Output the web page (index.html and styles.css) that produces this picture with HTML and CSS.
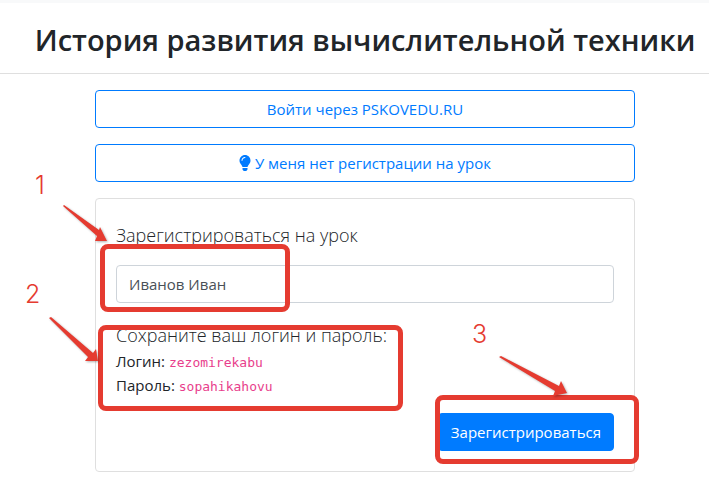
FILE: index.html
```
<!DOCTYPE html>
<html lang="ru">
<head>
    <meta charset="UTF-8">
    <meta name="viewport" content="width=device-width, initial-scale=1.0">
    <title>История развития вычислительной техники</title>
    <link rel="stylesheet" href="styles.css">
</head>
<body>
    <header class="page-header">
        <h1 class="page-title">История развития вычислительной техники</h1>
    </header>
    <main class="container">
        <button type="button" class="btn btn-outline">Войти через PSKOVEDU.RU</button>
        <button type="button" class="btn btn-outline">
            <svg class="icon" viewBox="0 0 352 512" aria-hidden="true">
                <path fill="currentColor" d="M96 454c0 6 2 12 5 18l17 25c6 9 16 15 27 15h62c11 0 21-6 27-15l17-25c3-6 5-12 5-18V416H96zM0 176c0 44 16 85 44 116 17 19 43 59 52 92h160c9-33 35-73 52-92 28-31 44-72 44-116C352 79 273 0 176 0 74 0 0 83 0 176zm176-80c-44 0-80 36-80 80 0 9-7 16-16 16s-16-7-16-16c0-62 50-112 112-112 9 0 16 7 16 16s-7 16-16 16z"/>
            </svg>
            У меня нет регистрации на урок
        </button>
        <form class="card">
            <label class="lead" for="full-name">Зарегистрироваться на урок</label>
            <input class="form-control" type="text" id="full-name" value="Иванов Иван">
            <div class="credentials">
                <div class="lead">Сохраните ваш логин и пароль:</div>
                <div>Логин: <code>zezomirekabu</code></div>
                <div>Пароль: <code>sopahikahovu</code></div>
            </div>
            <button type="button" class="btn btn-primary">Зарегистрироваться</button>
        </form>
    </main>

    <!-- Пометки с шагами поверх страницы -->
    <div class="mark mark-name"></div>
    <div class="mark mark-credentials"></div>
    <div class="mark mark-submit"></div>
    <span class="step step-1">1</span>
    <span class="step step-2">2</span>
    <span class="step step-3">3</span>
    <svg class="arrows" width="709" height="477" viewBox="0 0 709 477" aria-hidden="true">
        <path d="M63 206L64 205L99 230L100 227L107 241L95 241L97 236Z"/>
        <path d="M49 318L51 317L93 353L96 349L98 361L85 361L88 357Z"/>
        <path d="M499 357L501 356L559 386L561 381L567 393L553 396L555 391Z"/>
    </svg>
</body>
</html>
```
FILE: styles.css
```
* {
    box-sizing: border-box;
}
body {
    position: relative;
    margin: 0;
    background: #fff;
    color: #212529;
    font-family: "Open Sans", "Noto Sans", sans-serif;
    font-size: 16px;
    line-height: 24px;
}
.page-header {
    padding: 16px 0 13px 21px;
    border-top: 3px solid #f8f9fa;
    border-bottom: 1px solid #dfdfdf;
    text-align: center;
}
.page-title {
    margin: 0;
    font-size: 29px;
    font-weight: 600;
    line-height: 41px;
}
.container {
    display: flex;
    flex-direction: column;
    gap: 16px;
    padding: 16px 74px 5px 95px;
}
.btn {
    padding: 6px 12px;
    border: 1px solid #007bff;
    border-radius: 4px;
    font-family: inherit;
    font-size: 15px;
    line-height: 24px;
    cursor: pointer;
}
.btn-outline {
    background: transparent;
    color: #007bff;
}
.btn-primary {
    align-self: flex-end;
    background: #007bff;
    color: #fff;
}
.icon {
    width: 12px;
    height: 16px;
    vertical-align: -2px;
}
.card {
    display: flex;
    flex-direction: column;
    gap: 16px;
    padding: 20px;
    border: 1px solid #dfdfdf;
    border-radius: 4px;
}
.lead {
    font-size: 18px;
    font-weight: 300;
    line-height: 32px;
    margin-bottom: -2px;
}
.form-control {
    width: 100%;
    height: 38px;
    padding: 6px 12px;
    border: 1px solid #ced4da;
    border-radius: 4px;
    background: #fff;
    color: #495057;
    font-family: inherit;
    font-size: 15px;
    line-height: 24px;
}
.credentials {
    font-size: 15px;
}
code {
    color: #e83e8c;
    font-family: "DejaVu Sans Mono", monospace;
    font-size: 13px;
    line-height: 1;
}

/* пометки */
.mark {
    position: absolute;
    border: 5px solid #e53b30;
    border-radius: 8px;
    pointer-events: none;
}
.mark-name {
    left: 100px;
    top: 244px;
    width: 190px;
    height: 68px;
}
.mark-credentials {
    left: 98px;
    top: 325px;
    width: 305px;
    height: 86px;
}
.mark-submit {
    left: 435px;
    top: 395px;
    width: 204px;
    height: 69px;
}
.step {
    position: absolute;
    color: #e53b30;
    font-family: Inter, "Liberation Sans", sans-serif;
    font-size: 25px;
    font-weight: 300;
    line-height: 28px;
}
.step-1 {
    left: 35px;
    top: 171px;
}
.step-2 {
    left: 25px;
    top: 280px;
}
.step-3 {
    left: 472px;
    top: 320px;
}
.arrows {
    position: absolute;
    left: 0;
    top: 0;
    fill: #e53b30;
    filter: drop-shadow(1px 1px 1px rgba(0,0,0,0.3));
    pointer-events: none;
}
```
